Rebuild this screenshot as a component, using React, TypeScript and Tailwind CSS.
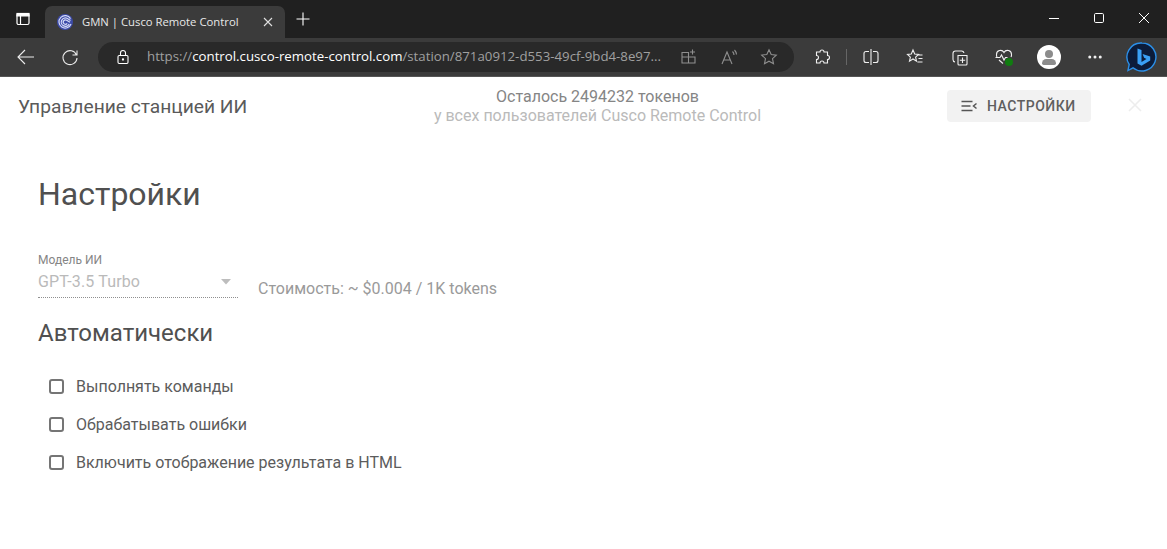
import React from "react";
import { MoreHorizontal } from "lucide-react";

const stroke = { fill: "none", stroke: "currentColor", strokeWidth: 1.1 };

// browser chrome icons, all on a 20px box
const Icon = ({ children, className }: { children: React.ReactNode; className?: string }) => (
  <svg width="20" height="20" viewBox="0 0 20 20" className={className} {...stroke}>
    {children}
  </svg>
);

const Favicon = () => (
  <svg width="16" height="16" viewBox="0 0 16 16" fill="none">
    <circle cx="8" cy="8" r="8" fill="#3d4ba8" />
    <path d="M13.5 4.6A6.2 6.2 0 1 0 14 10" stroke="#d5dbf7" strokeWidth="1.2" />
    <path d="M13.5 6.4L10 4.2A4.2 4.2 0 1 0 12.2 10" stroke="#d5dbf7" strokeWidth="1.2" />
    <path d="M13 8.2L9.6 6.2A2.2 2.2 0 1 0 10.2 9.4" stroke="#d5dbf7" strokeWidth="1.2" />
  </svg>
);

const BingLogo = () => (
  <svg width="32" height="32" viewBox="0 0 32 32" fill="none">
    <path d="M16 2a14 14 0 1 1-9 24.8L2 29.5l1.2-6A14 14 0 0 1 16 2Z" fill="#0c1c3a" stroke="#2b8fe8" strokeWidth="1.4" />
    <path d="M11.5 7.5l4 1.4v12l5-2.9-2.4-1.2-1.5-3.9 7.6 2.6v4l-8.7 5.2-4-2.2Z" fill="#3aa0f5" />
  </svg>
);

const Checkbox = ({ label }: { label: string }) => (
  <label className="flex items-center h-[38px] pl-[11px]">
    <span className="mb-[2px] w-[15px] h-[15px] rounded-[3px] border-2 border-[#757575] bg-white shrink-0" />
    <span className="ml-[12px] text-[16px] text-[#5c5c5c]">{label}</span>
  </label>
);

export default function App() {
  return (
    <div className="w-[1167px] h-[549px] overflow-hidden bg-white flex flex-col font-['Roboto',sans-serif]">
      {/* tab strip */}
      <div className="h-[38px] bg-[#202020] flex items-end shrink-0 text-white">
        <div className="w-[45px] h-[38px] flex items-center justify-center">
          <svg width="16" height="16" viewBox="0 0 16 16" fill="none" stroke="#ffffff" strokeWidth="1.2">
            <rect x="2" y="2.5" width="12" height="11" rx="1.5" />
            <rect x="2" y="2.5" width="12" height="2.4" fill="#ffffff" />
            <path d="M5.5 4.5v9" />
          </svg>
        </div>
        <div className="w-[240px] h-[32px] bg-[#3b3b3b] rounded-t-[7px] flex items-center pl-[12px] pr-[11px]">
          <Favicon />
          <span className="ml-[9px] text-[11.3px] text-[#e8e8e8] font-['Open_Sans',sans-serif] whitespace-nowrap flex-1">GMN | Cusco Remote Control</span>
          <svg width="12" height="12" viewBox="0 0 12 12" stroke="#e0e0e0" strokeWidth="1.1">
            <path d="M2 2l8 8M10 2l-8 8" />
          </svg>
        </div>
        <div className="w-[36px] h-[38px] flex items-center justify-center">
          <svg width="16" height="16" viewBox="0 0 16 16" stroke="#ffffff" strokeWidth="1.1">
            <path d="M8 1.5v13M1.5 8h13" />
          </svg>
        </div>
        <div className="flex-1" />
        <div className="w-[136px] h-[38px] pb-[2px] flex items-center text-white">
          <div className="w-[46px] flex justify-center">
            <svg width="12" height="12" viewBox="0 0 12 12" stroke="#ffffff"><path d="M1 6.5h10" /></svg>
          </div>
          <div className="w-[46px] flex justify-center">
            <svg width="12" height="12" viewBox="0 0 12 12" fill="none" stroke="#ffffff"><rect x="1.5" y="1.5" width="9" height="9" rx="1.2" /></svg>
          </div>
          <div className="w-[46px] flex justify-center">
            <svg width="12" height="12" viewBox="0 0 12 12" stroke="#ffffff"><path d="M1 1l10 10M11 1L1 11" /></svg>
          </div>
        </div>
      </div>

      {/* address bar */}
      <div className="h-[39px] bg-[#3b3b3b] border-b border-[#555555] flex items-center shrink-0 text-[#ececec]">
        <div className="w-[52px] flex justify-center">
          <Icon><path d="M18 10H2M9 3l-7 7 7 7" /></Icon>
        </div>
        <div className="w-[36px] flex justify-center">
          <Icon><path d="M16.5 8a7 7 0 1 0 .5 3M17 3.5V8h-4.5" /></Icon>
        </div>
        <div className="ml-[10px] w-[696px] h-[30px] rounded-full bg-[#292929] flex items-center pl-[17px]">
          <svg width="16" height="16" viewBox="0 0 16 16" fill="none" stroke="#ffffff" strokeWidth="1.1">
            <rect x="3" y="6.5" width="10" height="8" rx="1.2" />
            <path d="M5.5 6.5V4a2.5 2.5 0 0 1 5 0v2.5" />
            <circle cx="8" cy="10.5" r="0.6" fill="#ffffff" />
          </svg>
          <span className="ml-[16px] w-[522px] text-[13.25px] text-[#a0a0a0] font-['Open_Sans',sans-serif] whitespace-nowrap overflow-hidden">
            https://<span className="text-white">control.cusco-remote-control.com</span>/station/871a0912-d553-49cf-9bd4-8e97...
          </span>
          <div className="ml-[10px] flex items-center gap-[20px] text-[#8f8f8f]">
            <Icon><path d="M3 5.5h6.5V10H3ZM3 10h6.5v6H3ZM9.5 10H16v6H9.5ZM13.5 2.5v5M11 5h5" /></Icon>
            <Icon><path d="M3 17L8 5l5 12M4.8 13h6.4M13.5 4.5a5 5 0 0 1 1.5 3.5M15.5 3a7 7 0 0 1 2 4.5" /></Icon>
            <Icon><path d="M10 2.8l2.2 4.7 5.1.6-3.8 3.5 1 5.1-4.5-2.5-4.5 2.5 1-5.1-3.8-3.5 5.1-.6Z" /></Icon>
          </div>
        </div>
        <div className="flex items-center text-[#f0f0f0]">
          <div className="w-[36px] ml-[10px] mr-[6px] flex justify-center">
            <Icon><path d="M8 5a2 2 0 1 1 4 0h3.5v3.5a2 2 0 1 1 0 4V16H12a2 2 0 1 0-4 0H4.5v-3.5a2 2 0 1 0 0-4V5Z" /></Icon>
          </div>
          <div className="w-px h-[16px] bg-[#666666]" />
          <div className="w-[48px] flex justify-center">
            <Icon><path d="M10 2v16M8 4.5H5a2 2 0 0 0-2 2v7a2 2 0 0 0 2 2h3M12 4.5h3a2 2 0 0 1 2 2v7a2 2 0 0 1-2 2h-3" /></Icon>
          </div>
          <div className="w-[40px] flex justify-center">
            <Icon><path d="M8 3l1.7 4 3.8.4-2.9 2.7.9 4-3.5-2.1-3.5 2.1.9-4-2.9-2.7 3.8-.4ZM13 8h4.5M13.5 11.5h4M12.5 15h5" /></Icon>
          </div>
          <div className="w-[50px] flex justify-center">
            <Icon><path d="M5 15a2.5 2.5 0 0 1-2-2.5v-6A2.5 2.5 0 0 1 5.5 4h6A2.5 2.5 0 0 1 14 6M8 8.5h9V17a1 1 0 0 1-1 1H9a1 1 0 0 1-1-1ZM12.5 10.5v5.5M9.8 13.2h5.4" /></Icon>
          </div>
          <div className="relative w-[38px] flex justify-center">
            <Icon><path d="M3 10a4 4 0 0 1-.5-2.5A4 4 0 0 1 10 5.5a4 4 0 0 1 7.5 2 4 4 0 0 1-.5 2.5M1.5 10.5H6l1.5-2.5 2.5 5 1.5-2.5h2M5 13l4 3.5" /></Icon>
            <span className="absolute left-[20px] top-[11px] w-[8px] h-[8px] rounded-full bg-[#107c10]" />
          </div>
          <div className="w-[52px] flex justify-center">
            <div className="w-[24px] h-[24px] rounded-full bg-white flex flex-col items-center justify-center">
              <span className="w-[8px] h-[8px] rounded-full bg-[#8c8c8c]" />
              <span className="mt-[1px] w-[14px] h-[6px] rounded-t-[5px] rounded-b-[2px] bg-[#8c8c8c]" />
            </div>
          </div>
          <div className="w-[40px] flex justify-center">
            <MoreHorizontal size={18} strokeWidth={2} />
          </div>
          <div className="w-[52px] pl-[2px] flex justify-center">
            <BingLogo />
          </div>
        </div>
      </div>

      {/* page */}
      <div className="flex-1 relative">
        <header className="flex items-start h-[60px]">
          <div className="w-[425px] pl-[18px] pt-[17px] text-[19.2px] leading-[26px] text-[#5a5a5a]">Управление станцией ИИ</div>
          <div className="w-[345px] pt-[10px] text-center text-[16px] leading-[19px]">
            <div className="text-[#858585]">Осталось 2494232 токенов</div>
            <div className="text-[#bababa]">у всех пользователей Cusco Remote Control</div>
          </div>
          <div className="ml-[177px] mt-[13px] w-[144px] h-[32px] rounded-[4px] bg-[#f2f2f2] flex items-center pl-[14px]">
            <svg width="16" height="16" viewBox="0 0 16 16" fill="none" stroke="#555555" strokeWidth="1.5">
              <path d="M0.5 3.5h11M0.5 8h9M0.5 12.5h11M15.5 5.5L12.5 8l3 2.5" />
            </svg>
            <span className="ml-[10px] text-[14px] font-medium tracking-[0.5px] text-[#5f5f5f]">НАСТРОЙКИ</span>
          </div>
          <div className="ml-[37px] mt-[21px]">
            <svg width="14" height="14" viewBox="0 0 14 14" stroke="#ededed" strokeWidth="1.6">
              <path d="M1 1l12 12M13 1L1 13" />
            </svg>
          </div>
        </header>

        <main className="pl-[38px]">
          <h1 className="mt-[35px] text-[32px] leading-[44px] text-[#505050]">Настройки</h1>

          <div className="mt-[37px] flex items-end">
            <div className="w-[200px] border-b border-dotted border-[#8f8f8f]">
              <div className="text-[12px] leading-[14px] text-[#858585]">Модель ИИ</div>
              <div className="flex items-center justify-between h-[30px] text-[16px] tracking-[0.15px] text-[#bababa] pr-[6px]">
                <span>GPT-3.5 Turbo</span>
                <svg width="12" height="6" viewBox="0 0 12 6" fill="#bdbdbd"><path d="M1 0h10L6 5.5Z" /></svg>
              </div>
            </div>
            <span className="ml-[20px] text-[16px] leading-[19px] text-[#9a9a9a]">Стоимость: ~ $0.004 / 1K tokens</span>
          </div>

          <h2 className="mt-[19px] text-[24px] leading-[32px] text-[#505050]">Автоматически</h2>

          <div className="mt-[19px] flex flex-col">
            <Checkbox label="Выполнять команды" />
            <Checkbox label="Обрабатывать ошибки" />
            <Checkbox label="Включить отображение результата в HTML" />
          </div>
        </main>
      </div>
    </div>
  );
}
